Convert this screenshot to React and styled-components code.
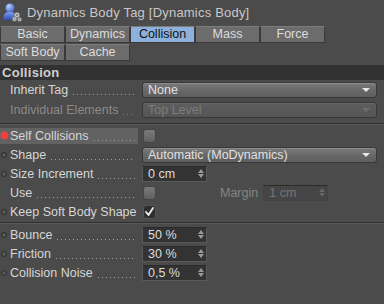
import React from "react";
import styled, { createGlobalStyle, css } from "styled-components";

const Global = createGlobalStyle`
  html, body { margin: 0; padding: 0; background: #4b4b4b; }
  body { font-family: "Liberation Sans", Arial, sans-serif; }
`;

const Page = styled.div`
  width: 384px;
  height: 304px;
  background: #4b4b4b;
  color: #d8d8d8;
  font-size: 12.5px;
  overflow: hidden;
`;

const TitleBar = styled.div`
  display: flex;
  align-items: center;
  gap: 5px;
  height: 24px;
  padding-left: 2px;
  color: #c8c8c8;
  font-size: 13px;
  letter-spacing: 0.2px;
`;

const Tabs = styled.div`
  display: grid;
  grid-template-columns: repeat(5, 63px);
  column-gap: 2px;
  row-gap: 1px;
  padding: 2px 0 0 1px;
`;

const Tab = styled.div`
  height: 15px;
  line-height: 15px;
  border: 1px solid #3a3a3a;
  border-top-color: #7c7c7c;
  margin: 0 -1px;
  text-align: center;
  font-size: 12.5px;
  background: ${p => (p.$active ? "#8db1dc" : "#6c6c6c")};
  color: ${p => (p.$active ? "#111" : "#dcdcdc")};
`;

const SectionHead = styled.div`
  margin-top: 4px;
  height: 15px;
  line-height: 15px;
  background: #323232;
  padding-left: 2px;
  font-weight: bold;
  color: #cfcfcf;
  font-size: 13px;
  letter-spacing: 0.3px;
`;

const Group = styled.div`
  display: flex;
  flex-direction: column;
  padding: ${p => p.$pad || "0"};
`;

const Sep = styled.div`
  height: 0;
  border-top: 1px solid #2e2e2e;
  border-bottom: 1px solid #5a5a5a;
  margin: ${p => p.$m || "2px 0"};
`;

const Row = styled.div`
  display: flex;
  align-items: center;
  height: ${p => p.$h || 19}px;
`;

const LabelCell = styled.div`
  position: relative;
  display: flex;
  align-items: center;
  width: 138px;
  height: 16px;
  padding-left: 10px;
  box-sizing: border-box;
  background: ${p => (p.$hl ? "#626262" : "transparent")};
  color: ${p => (p.$dis ? "#8a8a8a" : "#d6d6d6")};
  white-space: nowrap;
  overflow: hidden;
`;

const Dots = styled.span`
  flex: 1;
  height: 1px;
  margin: 0 3px 0 5px;
  align-self: flex-end;
  margin-bottom: 3px;
  background-image: linear-gradient(
    to right,
    ${p => (p.$dis ? "#7a7a7a" : "#a0a0a0")} 1px,
    transparent 1px
  );
  background-size: 4px 1px;
  background-repeat: repeat-x;
  min-width: 4px;
`;

const Bullet = styled.span`
  position: absolute;
  left: 1px;
  top: 5px;
  width: 6px;
  height: 6px;
  border-radius: 50%;
  box-sizing: border-box;
  ${p =>
    p.$red
      ? css`
          background: #ff3a3a;
          box-shadow: 0 0 2px #ff5050;
          top: 4px;
          width: 7px;
          height: 7px;
        `
      : css`
          border: 1px solid #2a2a2a;
          background: #585858;
        `}
`;

const Value = styled.div`
  display: flex;
  align-items: center;
  padding-left: 4px;
  flex: 1;
`;

const Dropdown = styled.div`
  display: flex;
  align-items: center;
  justify-content: space-between;
  width: 235px;
  height: 16px;
  box-sizing: border-box;
  border: 1px solid #383838;
  border-radius: 3px;
  padding: 0 6px 0 5px;
  background: ${p =>
    p.$dis
      ? "linear-gradient(#5d5d5d, #555)"
      : "linear-gradient(#7a7a7a, #666 60%, #5f5f5f)"};
  color: ${p => (p.$dis ? "#7c7c7c" : "#e0e0e0")};
  box-shadow: inset 0 1px 0 ${p => (p.$dis ? "#666" : "#8a8a8a")};
`;

const Arrow = styled.span`
  width: 0;
  height: 0;
  border-left: 4px solid transparent;
  border-right: 4px solid transparent;
  border-top: 4px solid ${p => (p.$dis ? "#6e6e6e" : "#e8e8e8")};
`;

const NumField = styled.div`
  display: flex;
  align-items: center;
  justify-content: space-between;
  width: ${p => p.$w || 65}px;
  height: 16px;
  box-sizing: border-box;
  border: 1px solid ${p => (p.$dis ? "#444" : "#5a5a5a")};
  border-top-color: #2a2a2a;
  background: ${p => (p.$dis ? "#454545" : "#333")};
  color: ${p => (p.$dis ? "#777" : "#dcdcdc")};
  padding: 0 2px 0 5px;
`;

const Spin = styled.span`
  display: flex;
  flex-direction: column;
  gap: 1px;
  &::before,
  &::after {
    content: "";
    width: 0;
    height: 0;
    border-left: 3px solid transparent;
    border-right: 3px solid transparent;
  }
  &::before {
    border-bottom: 4px solid ${p => (p.$dis ? "#666" : "#9a9a9a")};
  }
  &::after {
    border-top: 4px solid ${p => (p.$dis ? "#666" : "#9a9a9a")};
  }
`;

const Check = styled.div`
  width: 11px;
  height: 12px;
  margin-left: 1px;
  border-radius: 3px;
  background: ${p => (p.$on ? "#2f2f2f" : "linear-gradient(#7a7a7a, #606060)")};
  border: 1px solid ${p => (p.$on ? "#555" : "#444")};
  display: flex;
  align-items: center;
  justify-content: center;
`;

const MarginLabel = styled.span`
  color: #858585;
  margin: 0 5px 0 64px;
`;

function TagIcon() {
  return (
    <svg width="20" height="20" viewBox="0 0 20 20">
      <defs>
        <radialGradient id="hd" cx="0.35" cy="0.3" r="0.8">
          <stop offset="0" stopColor="#b8d0ff" />
          <stop offset="1" stopColor="#3a5fc0" />
        </radialGradient>
        <linearGradient id="bd" x1="0" y1="0" x2="0" y2="1">
          <stop offset="0" stopColor="#7f9ff0" />
          <stop offset="1" stopColor="#2d4aa8" />
        </linearGradient>
      </defs>
      <circle cx="8" cy="6" r="4.5" fill="url(#hd)" />
      <path d="M1 18 C1 11 4 10 8 10 C12 10 14 12 14 15 L14 18 Z" fill="url(#bd)" />
      <g fill="#c8c8c8" stroke="#777" strokeWidth="0.6">
        <circle cx="15" cy="13" r="2.6" />
        <circle cx="12.5" cy="17" r="2.2" />
        <circle cx="17.5" cy="17.5" r="2" />
      </g>
      <g fill="#666">
        <circle cx="15" cy="13" r="0.9" />
        <circle cx="12.5" cy="17" r="0.8" />
        <circle cx="17.5" cy="17.5" r="0.7" />
      </g>
    </svg>
  );
}

function CheckMark() {
  return (
    <svg width="9" height="9" viewBox="0 0 9 9">
      <path d="M1 5 L3.5 8 L8 1" fill="none" stroke="#f0f0f0" strokeWidth="1.8" strokeLinecap="round" strokeLinejoin="round" />
    </svg>
  );
}

function Label({ text, bullet, red, hl, dis }) {
  return (
    <LabelCell $hl={hl} $dis={dis}>
      {bullet && <Bullet $red={red} />}
      <span>{text}</span>
      <Dots $dis={dis} />
    </LabelCell>
  );
}

const tabs = [
  ["Basic"],
  ["Dynamics"],
  ["Collision", true],
  ["Mass"],
  ["Force"],
  ["Soft Body"],
  ["Cache"],
];

export default function App() {
  return (
    <Page>
      <Global />
      <TitleBar>
        <TagIcon />
        <span>Dynamics Body Tag [Dynamics Body]</span>
      </TitleBar>
      <Tabs>
        {tabs.map(([t, a]) => (
          <Tab key={t} $active={a}>
            {t}
          </Tab>
        ))}
      </Tabs>
      <SectionHead>Collision</SectionHead>
      <Group>
        <Row $h={20}>
          <Label text="Inherit Tag" />
          <Value>
            <Dropdown>
              <span>None</span>
              <Arrow />
            </Dropdown>
          </Value>
        </Row>
        <Row $h={20}>
          <Label text="Individual Elements" dis />
          <Value>
            <Dropdown $dis>
              <span>Top Level</span>
              <Arrow $dis />
            </Dropdown>
          </Value>
        </Row>
      </Group>
      <Sep $m="3px 0 0" />
      <Group $pad="1px 0 0">
        <Row>
          <Label text="Self Collisions" bullet red hl />
          <Value>
            <Check />
          </Value>
        </Row>
        <Row>
          <Label text="Shape" bullet />
          <Value>
            <Dropdown>
              <span>Automatic (MoDynamics)</span>
              <Arrow />
            </Dropdown>
          </Value>
        </Row>
        <Row>
          <Label text="Size Increment" bullet />
          <Value>
            <NumField>
              <span>0 cm</span>
              <Spin />
            </NumField>
          </Value>
        </Row>
        <Row>
          <Label text="Use" />
          <Value>
            <Check />
            <MarginLabel>Margin</MarginLabel>
            <NumField $dis>
              <span>1 cm</span>
              <Spin $dis />
            </NumField>
          </Value>
        </Row>
        <Row>
          <Label text="Keep Soft Body Shape" bullet />
          <Value>
            <Check $on>
              <CheckMark />
            </Check>
          </Value>
        </Row>
      </Group>
      <Sep $m="1px 0 0" />
      <Group $pad="1px 0 0">
        <Row>
          <Label text="Bounce" bullet />
          <Value>
            <NumField>
              <span>50 %</span>
              <Spin />
            </NumField>
          </Value>
        </Row>
        <Row>
          <Label text="Friction" bullet />
          <Value>
            <NumField>
              <span>30 %</span>
              <Spin />
            </NumField>
          </Value>
        </Row>
        <Row>
          <Label text="Collision Noise" bullet />
          <Value>
            <NumField>
              <span>0,5 %</span>
              <Spin />
            </NumField>
          </Value>
        </Row>
      </Group>
    </Page>
  );
}
